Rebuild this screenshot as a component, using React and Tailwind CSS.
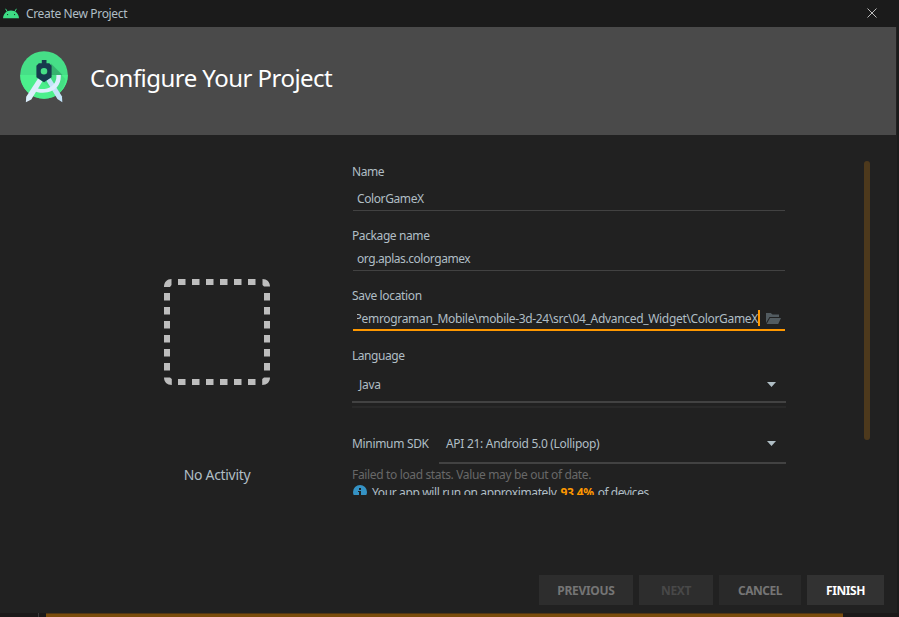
function AndroidHead() {
  return (
    <svg className="block h-[11px] w-4 shrink-0" viewBox="0 0 16 11">
      <path d="M2.6 .8 4.3 3.8M13.4 .8 11.7 3.8" stroke="#3ddc84" strokeWidth="1" fill="none" />
      <path d="M0 10.2C.4 5.6 3.6 2.6 8 2.6s7.6 3 8 7.6z" fill="#3ddc84" />
      <rect x="4" y="6" width="1.1" height="1.1" fill="#1b3b2a" />
      <rect x="11" y="6" width="1.1" height="1.1" fill="#1b3b2a" />
    </svg>
  );
}

function StudioLogo() {
  return (
    <svg className="block h-[54px] w-12 shrink-0" viewBox="0 0 48 54">
      <circle cx="24" cy="24" r="23.8" fill="#46df87" />
      <path d="M.2 24a23.8 23.8 0 0 0 47.6 0z" fill="#4bef8c" />
      <path d="M30 13 45.5 28A23.8 23.8 0 0 1 38 43L22 30z" fill="#3fd07c" opacity=".5" />
      <path d="M31 12.500 42.5 24H31z" fill="#2fa367" opacity=".7" />
      <path d="M26.3 29.5 30.2 26.6 42 45.5 42.3 51.3 37.4 48z" fill="#c3e3f8" />
      <path d="M18.2 27.200 22.300 30.6 11.300 48.4 5.9 51.3 6.2 45.7z" fill="#dceefc" />
      <path d="M16 36.5c3.2 1.800 7 2 11 .9 5.8-1.600 9.4-6 9.4-11.9V24h4.4v1.5c0 8.3-5.4 14.200-13.3 15.800-5.600 1-10.500.2-14.400-1.900z" fill="#dceefc" />
      <path d="M21.8 9h4.7v3.2h2.8L31.6 14.7v11.5L24 31.2l-7.6-5V14.7l2.4-2.5h3zM24 17a3.3 3.3 0 1 0 0 6.6 3.3 3.3 0 0 0 0-6.6z" fill="#173a4d" fillRule="evenodd" />
    </svg>
  );
}

function Folder() {
  return (
    <svg className="mb-[5px] block h-[11px] w-[15px] shrink-0" viewBox="0 0 15 11">
      <path d="M0 0h4.8l1.7 1.4H13V4H3.5L0 10z" fill="#525b60" />
      <path d="M4 5h11l-2.8 6H.6z" fill="#525b60" />
    </svg>
  );
}

function Arrow() {
  return (
    <svg className="block h-[5px] w-[9px] shrink-0" viewBox="0 0 9 5">
      <path d="M0 0h9L4.5 5z" fill="#b0bec5" />
    </svg>
  );
}

function EmptyActivity() {
  const steps = [14, 28, 42, 56, 70, 84];
  return (
    <svg className="block size-[106px]" viewBox="0 0 106 106" fill="#bdbdbd">
      {steps.map((p) => (
        <g key={p}>
          <rect x={p} y="0" width="7.5" height="6" />
          <rect x={p} y="100" width="7.5" height="6" />
          <rect x="0" y={p} width="6" height="7.5" />
          <rect x="100" y={p} width="6" height="7.5" />
        </g>
      ))}
      <path d="M7.5 0v6L6 8H0C0 3 3 0 7.5 0zM98.5 0v6l1.5 1.5h6C106 3 103 0 98.5 0zM0 98.5h6l1.8 1.5v6C3 106 0 103 0 98.5zM106 98.5h-6l-1.8 1.5v6c4.8 0 7.8-3 7.8-7.5z" />
    </svg>
  );
}

export default function App() {
  return (
    <div className="flex h-[617px] w-[899px] flex-col overflow-hidden bg-[#1b1b1b] font-['Noto_Sans','Open_Sans',sans-serif] text-xs leading-4 text-[#b0bec5] whitespace-nowrap">
      <div className="flex h-[613px] w-[897px] flex-col bg-[#212121]">
        <header className="flex h-[27px] shrink-0 items-center bg-[#1b1b1b] pl-[3px]">
          <AndroidHead />
          <span className="ml-[7px] tracking-[-0.35px]">Create New Project</span>
          <svg className="mr-5 mb-px ml-auto block size-[10px]" viewBox="0 0 10 10">
            <path d="M.5 .5l9 9M9.5 .5l-9 9" stroke="#bdbdbd" strokeWidth="1" />
          </svg>
        </header>
        <div className="flex h-[108px] w-[896px] shrink-0 items-center bg-[#4a4a4a] pb-[6px] pl-5">
          <StudioLogo />
          <h1 className="ml-[22px] text-2xl leading-8 tracking-[-0.54px] text-white">Configure Your Project</h1>
        </div>

        <main className="flex h-[360px] shrink-0 overflow-hidden">
          <section className="flex w-[352px] flex-col items-center pt-36 pl-[82px]">
            <EmptyActivity />
            <span className="mt-[81px] text-sm leading-[18px] tracking-[-0.32px]">No Activity</span>
          </section>

          <section className="w-[434px] pt-7">
            <div className="h-4 leading-[18px] tracking-[-0.4px]">Name</div>
            <div className="mx-px flex h-8 items-end border-b border-[#424242] pb-[3px] pl-1">
              <span className="tracking-[-0.4px]">ColorGameX</span>
            </div>
            <div className="mt-4 h-4 leading-[18px] tracking-[-0.4px]">Package name</div>
            <div className="mx-px flex h-7 items-end border-b border-[#424242] pb-[3px] pl-1">
              <span className="tracking-[-0.44px]">org.aplas.colorgamex</span>
            </div>
            <div className="mt-4 h-4 leading-[18px] tracking-[-0.34px]">Save location</div>
            <div className="mx-px flex h-7 items-end border-b-2 border-[#ff9800] pl-1">
              <div className="mb-[2px] flex w-[401px] justify-end overflow-hidden">
                <span className="tracking-[-0.32px]">Pemrograman_Mobile\mobile-3d-24\src\04_Advanced_Widget\ColorGameX</span>
              </div>
              <div className="mr-[6px] mb-[3px] h-4 w-[2px] bg-[#ff9800]" />
              <Folder />
            </div>
            <div className="mt-4 h-4 leading-[18px] tracking-[-0.45px]">Language</div>
            <div className="flex h-10 items-center justify-between border-b-2 border-[#424242] pt-1 pr-[10px] pl-[7px]">
              <span className="pt-[2px] tracking-[-0.3px]">Java</span>
              <Arrow />
            </div>
            <div className="mt-[3px] h-[2px] bg-[#292929]" />
            <div className="flex h-14">
              <span className="w-[87px] pt-[28px] tracking-[-0.32px]">Minimum SDK</span>
              <div className="flex flex-1 items-center justify-between border-b-2 border-[#424242] pt-4 pr-[10px] pl-[7px]">
                <span className="pt-[2px] tracking-[-0.3px]">API 21: Android 5.0 (Lollipop)</span>
                <Arrow />
              </div>
            </div>
            <div className="mt-[2px] h-4 leading-[18px] tracking-[-0.35px] text-[#686868]">Failed to load stats. Value may be out of date.</div>
            <div className="mt-[2px] ml-px flex h-4 leading-[18px]">
              <svg className="mt-px mr-[5px] block size-[14px]" viewBox="0 0 14 14">
                <circle cx="7" cy="7" r="7" fill="#3592c4" />
                <path d="M6 3h2v2H6zM5 6h3v5H6V7H5z" fill="#212121" />
              </svg>
              <span className="mr-1 tracking-[-0.37px]">Your app will run on approximately</span>
              <b className="mr-1 tracking-[-0.3px] text-[#ff9800]">93.4%</b>
              <span className="tracking-[-0.5px]">of devices.</span>
            </div>
          </section>
          <div className="mt-[26px] ml-[78px] h-[279px] w-[6px] rounded-full bg-[#4d391c]" />
        </main>

        <footer className="mt-20 ml-[539px] flex h-[30px] gap-[6px] font-bold">
          <div className="flex w-[94px] items-center justify-center bg-[#2d2d2d] pt-[2px] text-[#757575]"><span className="tracking-[-0.3px]">PREVIOUS</span></div>
          <div className="flex w-[74px] items-center justify-center bg-[#2d2d2d] pt-[2px] text-[#484848]"><span className="tracking-[-0.4px]">NEXT</span></div>
          <div className="flex w-[82px] items-center justify-center bg-[#292929] pt-[2px] text-[#757575]"><span className="tracking-[-0.5px]">CANCEL</span></div>
          <div className="flex w-[77px] items-center justify-center bg-[#323232] pt-[2px] text-white"><span className="tracking-[-0.4px]">FINISH</span></div>
        </footer>
      </div>
      <div className="flex h-1 bg-[#1b1919]">
        <div className="ml-[38px] h-1 w-px bg-[#3a3a3a]" />
        <div className="ml-[7px] h-1 w-[797px] border-t border-[#503614] bg-[#7a4c0c]" />
      </div>
    </div>
  );
}
